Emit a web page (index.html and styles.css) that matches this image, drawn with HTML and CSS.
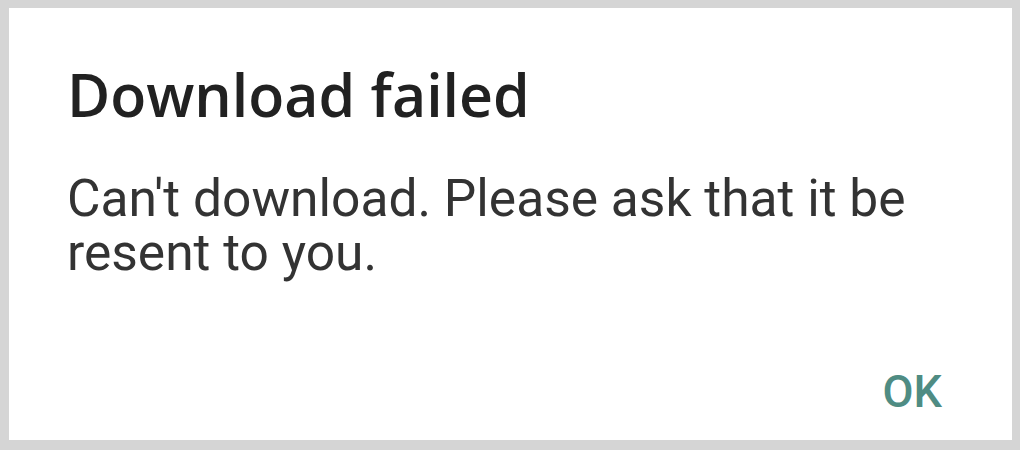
FILE: index.html
```html
<!DOCTYPE html>
<html>
<head>
<meta charset="utf-8">
<link rel="stylesheet" href="styles.css">
</head>
<body>
<div class="frame">
  <div class="dialog">
    <h1 class="title">Download failed</h1>
    <p class="message">Can't download. Please ask that it be resent to you.</p>
    <div class="actions">
      <span class="btn">OK</span>
    </div>
  </div>
</div>
</body>
</html>
```

FILE: styles.css
```css
html, body {
  margin: 0;
  padding: 0;
}
body {
  width: 1020px;
  height: 450px;
  background: #d5d5d5;
  font-family: Roboto, "Liberation Sans", sans-serif;
}
.frame {
  box-sizing: border-box;
  width: 1020px;
  height: 450px;
  padding: 8px 8px 10px 9px;
}
.dialog {
  box-sizing: border-box;
  height: 100%;
  background: #ffffff;
  padding: 56px 0 0 58px;
  display: flex;
  flex-direction: column;
}
.title {
  margin: 0;
  font-family: "Open Sans", Roboto, sans-serif;
  font-weight: 600;
  font-size: 59px;
  line-height: 60px;
  color: #212121;
}
.message {
  margin: 48px 0 0 0;
  width: 900px;
  font-size: 51.5px;
  line-height: 54px;
  color: #333333;
}
.actions {
  margin-top: auto;
  display: flex;
  justify-content: flex-end;
  padding: 0 70px 22px 0;
}
.btn {
  font-weight: 500;
  font-size: 45px;
  color: #4f8c83;
}
```
